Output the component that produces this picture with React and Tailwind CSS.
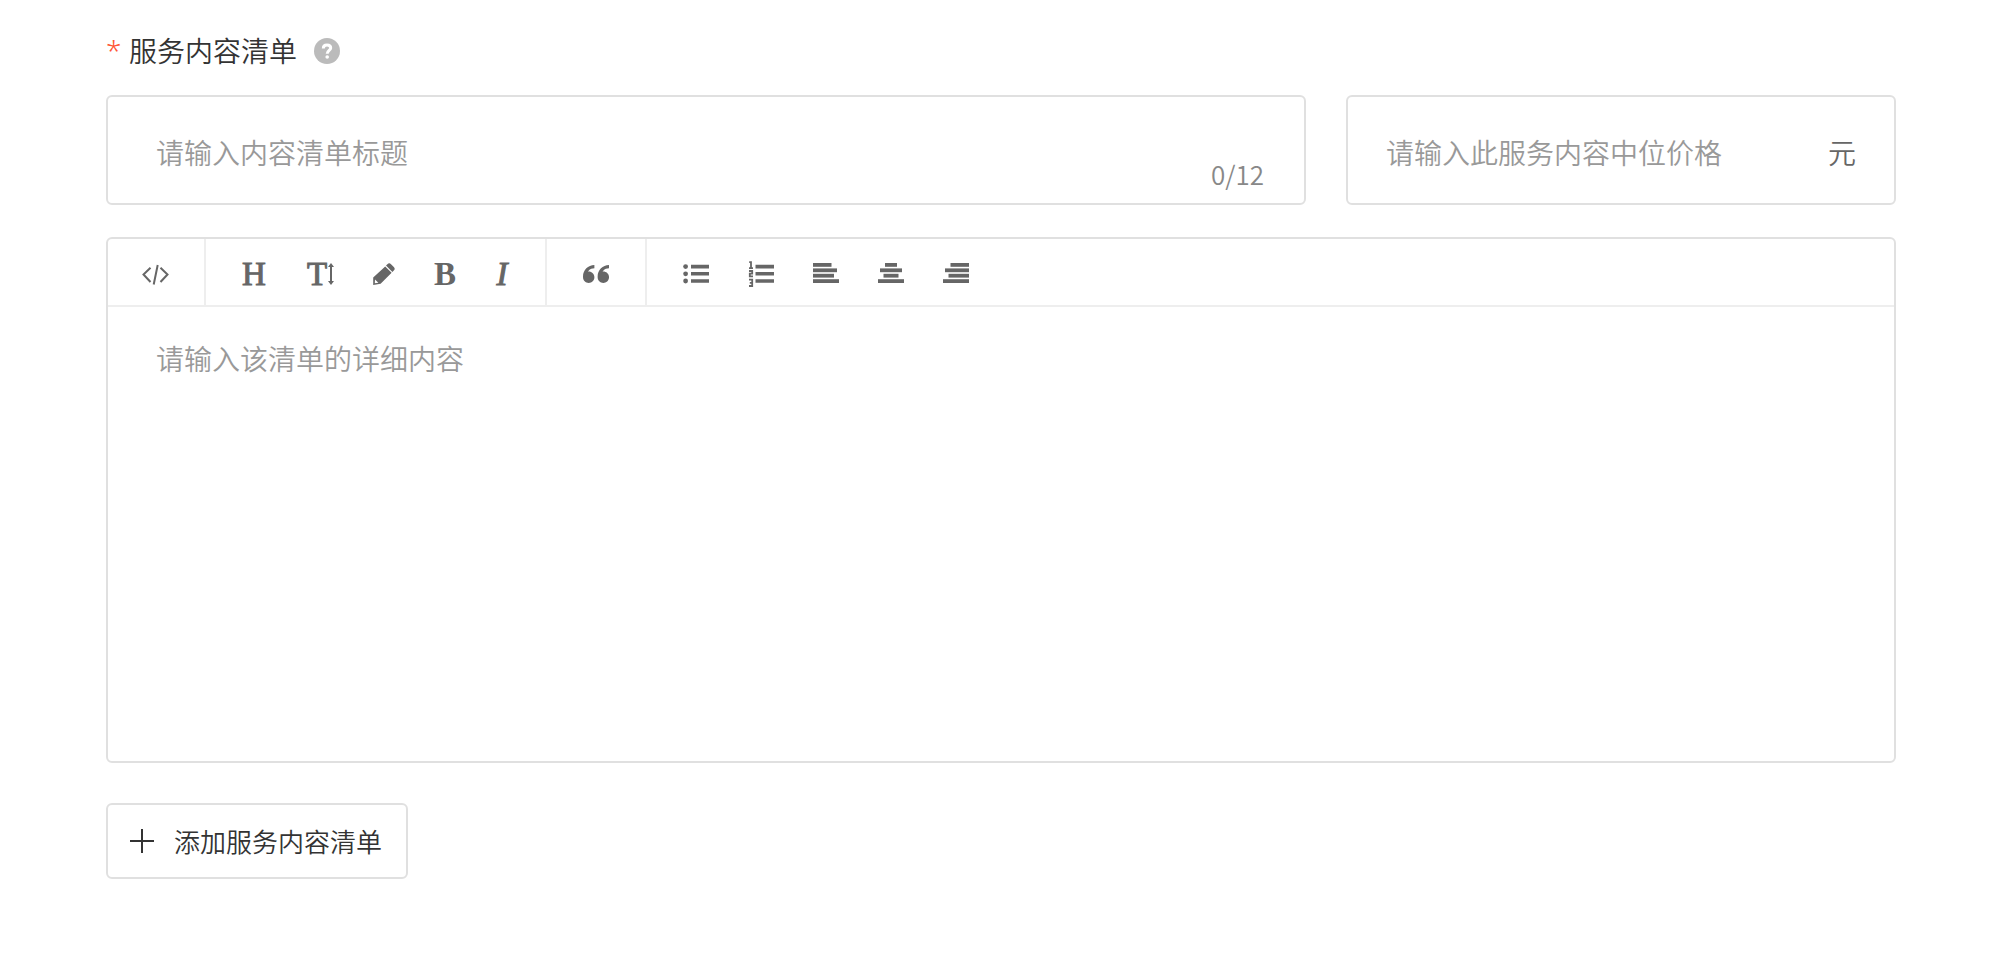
import React, { useState } from 'react'

const MAX_TITLE = 12

const CodeIcon = () => (
    <svg className="w-6 h-[26px] overflow-visible" viewBox="0 0 24 26" fill="none" stroke="currentColor" strokeWidth={2}>
        <path d="M6.5 6.8L-0.5 13.5L6.5 21M16.5 6.8L23.5 13.5L16.5 21M13.7 4L9.7 23.5" />
    </svg>
)

const SizeIcon = () => (
    <span className="flex w-[29px] h-[26px] items-center justify-between pl-[2px]">
        <span className="[-webkit-text-stroke:1px]">T</span>
        <svg className="w-[6px] h-[26px]" viewBox="0 0 6 26" fill="currentColor">
            <path d="M3 2L6 6H4V20H6L3 24L0 20H2V6H0Z" />
        </svg>
    </span>
)

const PencilIcon = () => (
    <svg className="w-[22px] h-[22px]" viewBox="0 0 22 22" fill="currentColor">
        <path d="M14.4 1.2Q16.2 -0.6 18 1.2L20.8 4Q22.6 5.8 20.8 7.6L19.4 9L13 2.6Z" />
        <path d="M12.2 3.4L18.6 9.8L7.6 20.8L0.2 22V14.6ZM2 16.6L1.8 20.3L5.4 19.8Z" fillRule="evenodd" />
    </svg>
)

const QuoteIcon = () => (
    <svg className="w-[26px] h-[26px]" viewBox="0 0 32 32" fill="currentColor">
        <path d="M7.031 13c3.866 0 7 3.134 7 7s-3.134 7-7 7-7-3.134-7-7l-0.031-1c0-7.732 6.268-14 14-14v4c-2.671 0-5.182 1.040-7.071 2.929-0.364 0.364-0.695 0.751-0.995 1.157 0.357-0.056 0.724-0.086 1.097-0.086z" />
        <path d="M25.031 13c3.866 0 7 3.134 7 7s-3.134 7-7 7-7-3.134-7-7l-0.031-1c0-7.732 6.268-14 14-14v4c-2.671 0-5.182 1.040-7.071 2.929-0.364 0.364-0.695 0.751-0.995 1.157 0.357-0.056 0.724-0.086 1.097-0.086z" />
    </svg>
)

const BulletListIcon = () => (
    <svg className="w-[26px] h-[26px]" viewBox="0 0 26 26" fill="currentColor">
        <path d="M8 3.8h18v3.6H8zM8 11h18v3.6H8zM8 18.2h18v3.6H8z" />
        <circle cx="2.6" cy="5.6" r="2.4" />
        <circle cx="2.6" cy="12.8" r="2.4" />
        <circle cx="2.6" cy="20" r="2.4" />
    </svg>
)

const NumberListIcon = () => (
    <svg className="w-[26px] h-[26px]" viewBox="0 0 26 26" fill="currentColor">
        <path d="M7.5 3.8H26v3.6H7.5zM7.5 11H26v3.6H7.5zM7.5 18.2H26v3.6H7.5z" />
        <path
            d="M1.2 1.2H3V7M1 7.2H5M1 10H4.2V12.6H1.8V15.4H5M1 18.6H4.2V25H1M1.8 21.8H4.2"
            fill="none"
            stroke="currentColor"
            strokeWidth={1.8}
        />
    </svg>
)

// bars: [x, width] from top to bottom
const AlignIcon = ({ bars }) => (
    <svg className="w-[26px] h-[26px]" viewBox="0 0 26 26" fill="currentColor">
        {bars.map(([x, width], i) => (
            <rect key={i} x={x} y={2 + i * 5.4} width={width} height={3.8} />
        ))}
    </svg>
)

const toolGroups = [
    [{ label: '源代码', icon: <CodeIcon /> }],
    [
        { label: '标题', icon: <span className="w-6 text-center [-webkit-text-stroke:1px]">H</span> },
        { label: '字号', icon: <SizeIcon /> },
        { label: '文字颜色', icon: <PencilIcon /> },
        { label: '粗体', icon: <span className="w-[22px] text-center font-bold">B</span> },
        { label: '斜体', icon: <span className="w-[14px] text-center [-webkit-text-stroke:1px] italic">I</span> }
    ],
    [{ label: '引用', icon: <QuoteIcon /> }],
    [
        { label: '无序列表', icon: <BulletListIcon /> },
        { label: '有序列表', icon: <NumberListIcon /> },
        { label: '左对齐', icon: <AlignIcon bars={[[0, 18.5], [0, 24], [0, 21], [0, 26]]} /> },
        { label: '居中', icon: <AlignIcon bars={[[7, 12], [2, 22], [5.5, 15], [0, 26]]} /> },
        { label: '右对齐', icon: <AlignIcon bars={[[7.5, 18.5], [2, 24], [5.5, 20.5], [0, 26]]} /> }
    ]
]

const Toolbar = () => (
    <div className="flex h-[68px] border-b-2 border-[#eeeeee]">
        {toolGroups.map((group, i) => (
            <div
                key={i}
                className="flex items-center gap-[39px] px-9 pt-1 border-r-2 border-[#eeeeee] last:border-r-0"
            >
                {group.map((tool) => (
                    <button
                        key={tool.label}
                        type="button"
                        aria-label={tool.label}
                        className="flex h-[26px] items-center justify-center font-['Liberation_Serif',serif] text-[33px] leading-[26px] text-[#666666]"
                    >
                        {tool.icon}
                    </button>
                ))}
            </div>
        ))}
    </div>
)

const App = () => {
    const [title, setTitle] = useState('')
    const [price, setPrice] = useState('')
    const [detail, setDetail] = useState('')

    return (
        <main className="px-[106px] pt-[31px] pb-[74px] bg-white font-['Noto_Sans_CJK_SC',sans-serif] font-[350] text-[28px] leading-10 text-[#333333]">
            {/* Field label */}
            <div className="flex items-center h-10">
                <label htmlFor="title" className="flex gap-2 pb-[2px]">
                    <span className="w-[15px] text-[#ff5533] font-['Noto_Sans',sans-serif]">*</span>
                    <span>服务内容清单</span>
                </label>
                <button
                    type="button"
                    aria-label="帮助"
                    className="ml-[17px] flex w-[26px] h-[26px] rounded-full bg-[#bbbbbb] text-white"
                >
                    <svg className="w-[26px] h-[26px]" viewBox="0 0 26 26" fill="none" stroke="currentColor" strokeWidth={3}>
                        <path d="M9.3 10.4C9.3 8 10.9 7 13 7C15.2 7 16.7 8.2 16.7 10C16.7 12.4 13.2 12.6 13.2 15.8" />
                        <circle cx="13.2" cy="19" r="1.8" fill="currentColor" stroke="none" />
                    </svg>
                </button>
            </div>

            {/* Title and price */}
            <div className="mt-6 grid grid-cols-[24fr_11fr] gap-10">
                <div className="flex h-[110px] pt-1 pl-12 pr-10 border-2 border-[#e0e0e0] rounded-md">
                    <input
                        id="title"
                        type="text"
                        maxLength={MAX_TITLE}
                        value={title}
                        onChange={(e) => setTitle(e.target.value)}
                        placeholder="请输入内容清单标题"
                        className="flex-1 min-w-0 outline-none placeholder:text-[#999999]"
                    />
                    <span className="self-end pb-[9px] text-[26px] text-[#888888]">
                        {title.length}/{MAX_TITLE}
                    </span>
                </div>
                <div className="flex items-center h-[110px] pt-1 px-[38px] border-2 border-[#e0e0e0] rounded-md">
                    <input
                        id="price"
                        type="text"
                        aria-label="价格"
                        value={price}
                        onChange={(e) => setPrice(e.target.value)}
                        placeholder="请输入此服务内容中位价格"
                        className="flex-1 min-w-0 outline-none placeholder:text-[#999999]"
                    />
                    <label htmlFor="price" className="text-[#666666]">元</label>
                </div>
            </div>

            {/* Rich text editor */}
            <div className="mt-8 border-2 border-[#e0e0e0] rounded-md">
                <Toolbar />
                <textarea
                    aria-label="详细内容"
                    value={detail}
                    onChange={(e) => setDetail(e.target.value)}
                    placeholder="请输入该清单的详细内容"
                    className="block w-full h-[454px] px-12 py-[31px] resize-none outline-none placeholder:text-[#999999]"
                />
            </div>

            <button
                type="button"
                className="mt-10 flex items-center h-[76px] gap-5 pl-[22px] pr-6 border-2 border-[#e0e0e0] rounded-md text-[26px]"
            >
                <svg className="w-6 h-6" viewBox="0 0 24 24" fill="none" stroke="currentColor" strokeWidth={2}>
                    <path d="M12 0V24M0 12H24" />
                </svg>
                添加服务内容清单
            </button>
        </main>
    )
}

export default App
